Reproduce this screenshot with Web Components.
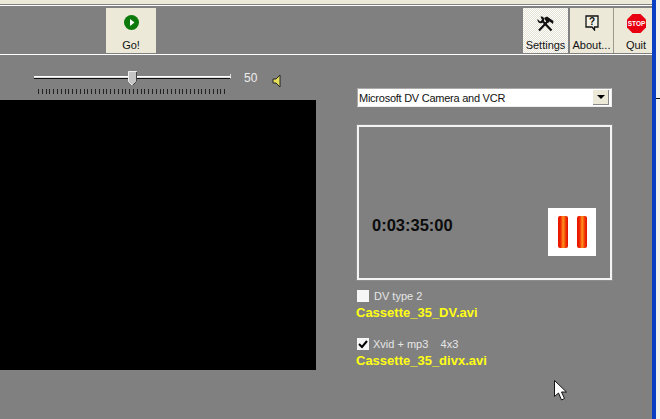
<!DOCTYPE html>
<html>
<head>
<meta charset="utf-8">
<style>
  html, body { margin: 0; background: #808080; overflow: hidden; }
  body { font-family: "Liberation Sans", Arial, sans-serif; }
</style>
</head>
<body>

<capture-window>
  <tool-bar slot="toolbar">
    <tool-button style="margin-left:106px;width:50px" label="Go!">
      <svg width="15" height="15" viewBox="0 0 15 15"><circle cx="7.500" cy="7.500" r="7.500" fill="#0b7a0b"/><path d="M6 4l4.500 3.500L6 11z" fill="#fff"/></svg>
    </tool-button>
    <tool-button style="margin-left:auto;width:45px" label="Settings" hot>
      <svg style="margin-top:2px" width="17" height="16" viewBox="0 0 17 16"><path d="M14.500 14.500L5 4.500M2 14.500L11 5" stroke="#111" stroke-width="2.200" fill="none"/><path d="M.5 3L3 5.500 5 4 3.500.5C6 0 8 2 7 5L5 7C2.500 8 0 6 .5 3z" fill="#111"/><path d="M7 2L10 .5 16.500 5 16 8 12.500 5.500 11 7 8.500 4.500z" fill="#111"/></svg>
    </tool-button>
    <tool-button style="margin-left:2px;width:43px" label="About...">
      <svg style="margin-top:1px" width="14" height="16" viewBox="0 0 14 16"><path d="M1 1h12v11H9.500v3L7 12H1z" fill="#f4f2e6" stroke="#111" stroke-width="1.300"/><text x="7" y="10" font-size="10" font-weight="700" text-anchor="middle" font-family="Liberation Sans" fill="#111">?</text></svg>
    </tool-button>
    <tool-button style="width:39px;padding-left:6px;border-left:1px solid #9c9a8c" label="Quit">
      <svg style="margin-top:2px" width="19" height="19" viewBox="0 0 19 19"><path d="M5.500 0h8L19 5.500v8L13.500 19h-8L0 13.500v-8z" fill="#e80010"/><text x="9.500" y="11.800" font-size="6.500" font-weight="700" text-anchor="middle" font-family="Liberation Sans" fill="#fff">STOP</text></svg>
    </tool-button>
  </tool-bar>

  <div slot="left">
    <volume-slider value="50"></volume-slider>
    <video-pane></video-pane>
  </div>

  <div slot="right">
    <device-select>Microsoft DV Camera and VCR</device-select>
    <status-box time="0:03:35:00"></status-box>
    <record-option label="DV type 2" file="Cassette_35_DV.avi"></record-option>
    <record-option style="margin-top:16px" label="Xvid + mp3 &nbsp;&nbsp; 4x3" file="Cassette_35_divx.avi" checked></record-option>
  </div>
</capture-window>

<mouse-pointer></mouse-pointer>

<script>
  function define(name, html, init) {
    customElements.define(name, class extends HTMLElement {
      constructor() {
        super();
        this.attachShadow({ mode: "open" });
        this.shadowRoot.innerHTML = html;
      }
      connectedCallback() {
        if (init) init(this, this.shadowRoot);
      }
    });
  }

  define("capture-window", `
    <style>
      :host { display: flex; height: 419px; width: 660px; background: #808080; }
      .main { width: 652px; flex: none; display: flex; flex-direction: column; }
      .top { height: 4px; background: #ece9d8; }
      .bar { margin-top: 1px; border-top: 1px solid #fff; border-bottom: 1px solid #fff; height: 48px; }
      .body { flex: 1; display: flex; }
      .left { width: 316px; }
      .right { margin-left: 41px; width: 255px; padding-top: 33px; }
      .rule { margin-left: auto; margin-right: 7px; width: 1px; background: #8c7d7d; }
      .edge { width: 4px; flex: none; background: #0a3fc4; }
      .far { width: 4px; flex: none; display: flex; flex-direction: column; }
      .far .up { height: 98px; background: #f4f3ee; }
      .far .tick { height: 1px; background: #111; }
      .far .down { flex: 1; background: #f4f3ee; }
    </style>
    <div class="main">
      <div class="top"></div>
      <div class="bar"><slot name="toolbar"></slot></div>
      <div class="body">
        <div class="left"><slot name="left"></slot></div>
        <div class="right"><slot name="right"></slot></div>
        <div class="rule"></div>
      </div>
    </div>
    <div class="edge"></div>
    <div class="far"><div class="up"></div><div class="tick"></div><div class="down"></div></div>
  `);

  define("tool-bar", `
    <style>
      :host { display: flex; height: 48px; padding-top: 2px; box-sizing: border-box; }
    </style>
    <slot></slot>
  `);

  define("tool-button", `
    <style>
      :host {
        display: flex; flex-direction: column; align-items: center; box-sizing: border-box;
        height: 45px; background: #ece9d8; color: #111; font-size: 11px;
        padding-top: 4px;
      }
      :host([hot]) {
        background: repeating-conic-gradient(#fff 0 25%, #e4e1d2 0 50%) 0 0 / 2px 2px;
      }
      .icon { height: 21px; display: flex; align-items: center; justify-content: center; }
      .label { margin-top: 6px; line-height: 13px; white-space: nowrap; }
    </style>
    <div class="icon"><slot></slot></div>
    <div class="label"></div>
  `, (el, root) => {
    root.querySelector(".label").textContent = el.getAttribute("label");
  });

  define("volume-slider", `
    <style>
      :host { display: block; height: 45px; position: relative; }
      .row { display: flex; align-items: flex-start; padding: 21px 0 0 34px; }
      .col { width: 197px; }
      .track { height: 1px; border-top: 1px solid #fff; border-bottom: 1px solid #111; border-right: 1px solid #fff; background: #ddd; position: relative; }
      .track::after { content: ""; position: absolute; right: -1px; top: -3px; width: 1px; height: 3px; background: #ddd; }
      .thumb { position: absolute; left: 128px; top: 16px; }
      .ticks {
        margin: 10px 0 0 4px; width: 190px; height: 5px;
        background: repeating-linear-gradient(90deg, #222 0 1px, transparent 1px 3.800px);
      }
      .val { margin-left: 13px; color: #eee; font-size: 12px; line-height: 13px; margin-top: -4px; }
      .spk { margin-left: 15px; margin-top: -2px; }
    </style>
    <div class="row">
      <div class="col">
        <div class="track"></div>
        <div class="ticks"></div>
      </div>
      <div class="val"></div>
      <svg class="spk" width="10" height="14" viewBox="0 0 10 14"><path d="M1 5h3l4-4v12L4 9H1z" fill="#e6e05a" stroke="#222"/></svg>
    </div>
    <svg class="thumb" width="9" height="15" viewBox="0 0 9 15"><path d="M.5.500h8v10l-4 4-4-4z" fill="#c4c4c4" stroke="#eee"/><path d="M8.500 1v9.500l-4 4" fill="none" stroke="#444"/></svg>
  `, (el, root) => {
    root.querySelector(".val").textContent = el.getAttribute("value");
  });

  define("video-pane", `
    <style>
      :host { display: block; height: 270px; background: #000; }
    </style>
  `);

  define("device-select", `
    <style>
      :host {
        display: flex; align-items: center; box-sizing: border-box;
        height: 19px; background: #fff; color: #111; font-size: 11px;
        border: 1px solid #aaa; border-right-color: #eee; border-bottom-color: #eee; padding: 2px 2px 2px 1px;
      }
      .txt { flex: 1; white-space: nowrap; letter-spacing: -.25px; }
      .btn {
        width: 15px; height: 14px; background: #ece9d8; display: flex;
        align-items: center; justify-content: center;
        border-right: 1px solid #888; border-bottom: 1px solid #888;
      }
      .arrow { width: 0; height: 0; border: 4px solid transparent; border-top-color: #000; border-bottom: 0; }
    </style>
    <span class="txt"><slot></slot></span>
    <span class="btn"><span class="arrow"></span></span>
  `);

  define("status-box", `
    <style>
      :host {
        display: flex; box-sizing: border-box; margin-top: 18px; height: 155px;
        border: 2px solid #f4f4f4; outline: 1px solid #8c8c8c;
        align-items: flex-end; padding: 0 14px 22px 13px;
      }
      .time { font-weight: 700; font-size: 16.500px; line-height: 18px; color: #0c0c0c; margin-bottom: 22px; flex: 1; }
      .pause { width: 48px; height: 48px; background: #fff; display: flex; align-items: center; justify-content: center; gap: 9px; }
      .pause i {
        width: 10px; height: 32px; border-radius: 2px;
        background: linear-gradient(90deg, #e81a00 0 2px, #ff5a10 4px, #ff9820 5px, #f03000 8px, #e01000 10px);
      }
    </style>
    <div class="time"></div>
    <div class="pause"><i></i><i></i></div>
  `, (el, root) => {
    root.querySelector(".time").textContent = el.getAttribute("time");
  });

  define("record-option", `
    <style>
      :host { display: block; margin-top: 9px; }
      .row { display: flex; align-items: center; height: 14px; color: #e6e6e6; font-size: 11px; }
      .box { width: 12px; height: 12px; background: #f6f6f6; margin-right: 5px; display: flex; }
      .box svg { display: none; }
      :host([checked]) .box svg { display: block; }
      :host([checked]) .box { margin-right: 4px; }
      .file { color: #ffff14; font-size: 13px; font-weight: 700; line-height: 16px; margin: 2px 0 0 -1px; }
    </style>
    <div class="row">
      <span class="box"><svg width="12" height="12" viewBox="0 0 12 12"><path d="M2 6l3 3 5-6" fill="none" stroke="#000" stroke-width="2"/></svg></span>
      <span class="lab"></span>
    </div>
    <div class="file"></div>
  `, (el, root) => {
    root.querySelector(".lab").innerHTML = el.getAttribute("label").replace(/\u00a0/g, "&nbsp;");
    root.querySelector(".file").textContent = el.getAttribute("file");
  });

  define("mouse-pointer", `
    <style>
      :host { position: absolute; left: 554px; top: 380px; width: 14px; height: 22px; }
    </style>
    <svg width="14" height="22" viewBox="0 0 14 22"><path d="M.5.500v16l4-3.500 3 7 3-1.500-3-6.500h5z" fill="#fff" stroke="#111"/></svg>
  `);
</script>
</body>
</html>
